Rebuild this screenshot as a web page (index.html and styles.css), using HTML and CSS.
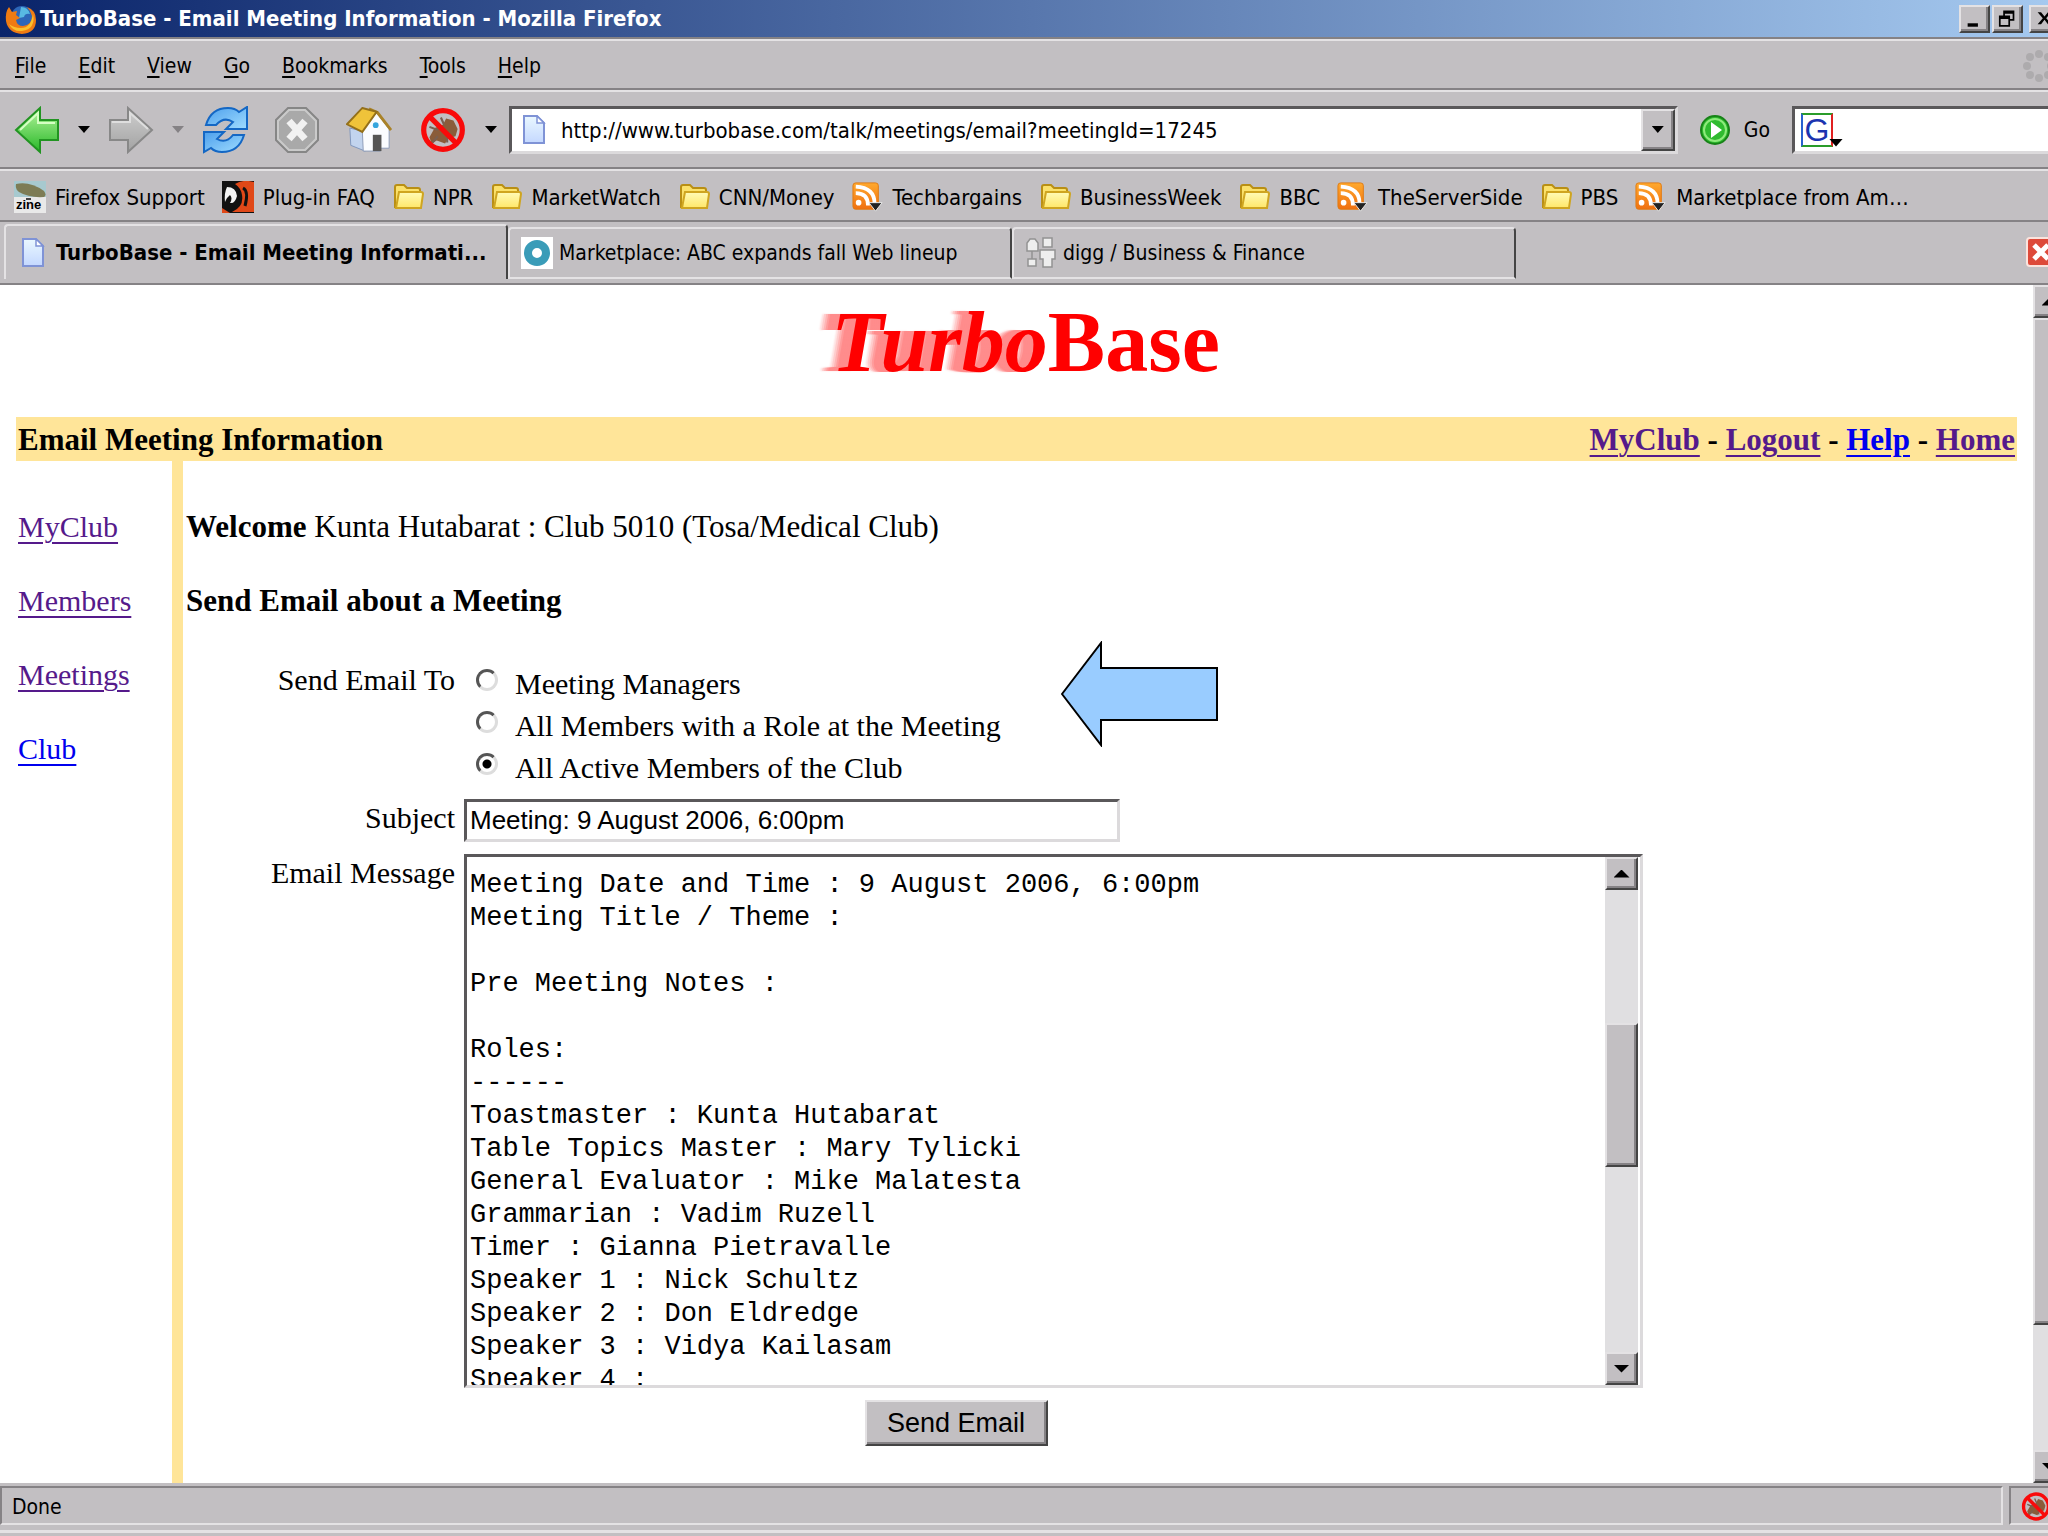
FILE: index.html
```html
<!DOCTYPE html>
<html lang="en">
<head>
  <meta charset="UTF-8" />
  <meta name="viewport" content="width=device-width, initial-scale=1.0"/>
  <title>TurboBase - Email Meeting Information</title>
  <link rel="stylesheet" href="styles.css">
</head>
<body>

<!-- shared icons -->
<svg class="defs" aria-hidden="true">
  <defs>
    <linearGradient id="gBlue" x1="0" y1="0" x2="0" y2="1"><stop offset="0" stop-color="#eaf8ff"/><stop offset="1" stop-color="#c4d8ff"/></linearGradient>
    <linearGradient id="gYellow" x1="0" y1="0" x2="0" y2="1"><stop offset="0" stop-color="#fffbb8"/><stop offset="1" stop-color="#ffe768"/></linearGradient>
    <linearGradient id="gOrange" x1="0" y1="0" x2="0" y2="1"><stop offset="0" stop-color="#ffa92e"/><stop offset="1" stop-color="#f07010"/></linearGradient>
    <linearGradient id="gGreen" x1="0" y1="0" x2="0" y2="1"><stop offset="0" stop-color="#b4f49c"/><stop offset="1" stop-color="#28b828"/></linearGradient>
    <linearGradient id="gGray" x1="0" y1="0" x2="0" y2="1"><stop offset="0" stop-color="#cfcfcf"/><stop offset="1" stop-color="#a2a2a2"/></linearGradient>
    <linearGradient id="gSky" x1="0" y1="0" x2="1" y2="1"><stop offset="0" stop-color="#4c9fec"/><stop offset="1" stop-color="#9fdcff"/></linearGradient>
  </defs>
  <symbol id="page" viewBox="0 0 24 30">
    <path d="M2 1h13l7 7v20H2z" fill="url(#gBlue)" stroke="#7f93d6" stroke-width="2"/>
    <path d="M15 1v7h7z" fill="#fff" stroke="#7f93d6" stroke-width="1.5"/>
  </symbol>
  <symbol id="folder" viewBox="0 0 32 26">
    <path d="M3 23V3q0-2 2-2h7l3 3h11q2 0 2 2v16z" fill="#fbe16a" stroke="#b98f14" stroke-width="2"/>
    <path d="M4 24L7 8h22q2 0 2 2l-2 14z" fill="url(#gYellow)" stroke="#cfa520" stroke-width="2"/>
  </symbol>
  <symbol id="rss" viewBox="0 0 34 32">
    <rect x="1" y="1" width="27" height="28" rx="3" fill="url(#gOrange)" stroke="#e07a10"/>
    <circle cx="7" cy="22" r="3" fill="#fff"/>
    <path d="M4 12q13 0 13 13M4 5q20 1 20 18" fill="none" stroke="#fff" stroke-width="4"/>
    <path d="M18 22h14l-7 9z" fill="#222" stroke="#eee"/>
  </symbol>
  <symbol id="nobug" viewBox="0 0 44 46">
    <path d="M9 30l5-9 8-3 3-6 7 2 4 8-2 7-7 2-3 5-8-3-5 3z" fill="#8a5c3a"/>
    <path d="M9 20l8 3M20 11l3 7M12 35l5-6M26 35l0-7" stroke="#7a5f50" stroke-width="2"/>
    <circle cx="22" cy="23" r="18.500" fill="none" stroke="#f90a0a" stroke-width="5"/>
    <path d="M9 10l26 26" stroke="#f90a0a" stroke-width="5"/>
  </symbol>
</svg>

<div class="window">

  <div class="titlebar">
    <svg class="fox" viewBox="0 0 32 30">
      <circle cx="17" cy="13" r="11" fill="#2d67b8"/>
      <path d="M16 3q7 0 9 7-5-1-6 3l-5 1z" fill="#58b9e2"/>
      <path d="M4 3l3 5 5-1-1 4 4 3-4 2q1 6 7 6 9-1 9-10-1-5-5-9 9 3 9 13 0 13-14 14Q3 29 1 17 0 8 4 3z" fill="#f07b12"/>
      <path d="M28 10q3 15-11 17Q8 28 4 20q5 4 12 4 10 0 12-14z" fill="#fbc02c"/>
    </svg>
    <span class="title">TurboBase - Email Meeting Information - Mozilla Firefox</span>
    <div class="winbtns">
      <button class="raised" aria-label="Minimize"><svg viewBox="0 0 30 28"><path d="M7 19h12v4H7z"/></svg></button>
      <button class="raised" aria-label="Restore"><svg viewBox="0 0 30 28"><path d="M10 4h13v12h-5v7H5V10h5zM12 8v2h6v4h3V8zM7 14v7h9v-7z" fill-rule="evenodd"/></svg></button>
      <button class="raised close" aria-label="Close"><svg viewBox="0 0 30 28"><path d="M7 6h4l4 5 4-5h4l-6 7 6 7h-4l-4-5-4 5H7l6-7z"/></svg></button>
    </div>
  </div>

  <div class="menubar bar">
    <button><u>F</u>ile</button>
    <button><u>E</u>dit</button>
    <button><u>V</u>iew</button>
    <button><u>G</u>o</button>
    <button><u>B</u>ookmarks</button>
    <button><u>T</u>ools</button>
    <button><u>H</u>elp</button>
    <svg class="throbber" viewBox="0 0 32 32" fill="#adabad">
      <circle cx="16" cy="4" r="4"/><circle cx="25" cy="7" r="4"/><circle cx="28" cy="16" r="4"/><circle cx="25" cy="25" r="4"/>
      <circle cx="16" cy="28" r="4"/><circle cx="7" cy="25" r="4"/><circle cx="4" cy="16" r="4"/><circle cx="7" cy="7" r="4"/>
    </svg>
  </div>

  <div class="toolbar bar">
    <button class="tool" aria-label="Back"><svg viewBox="0 0 46 48"><path d="M2 24L26 2v12h18v20H26v12z" fill="url(#gGreen)" stroke="#219421" stroke-width="2"/><path d="M6 24L24 7v10h17" fill="none" stroke="#d5ffc4" stroke-width="2"/></svg></button>
    <span class="caret"></span>
    <button class="tool" aria-label="Forward"><svg viewBox="0 0 46 48"><path d="M44 24L20 2v12H2v20h18v12z" fill="url(#gGray)" stroke="#888" stroke-width="2"/><path d="M4 16h18V7l18 16" fill="none" stroke="#dedede" stroke-width="2"/></svg></button>
    <span class="caret off"></span>
    <button class="tool reload" aria-label="Reload"><svg viewBox="0 0 46 48">
      <path d="M4 19Q9 2 26 2q7 0 11 4l8-5v22H24l7-7q-9-6-17 3z" fill="url(#gSky)" stroke="#1467c4" stroke-width="2"/>
      <path d="M42 29Q37 46 20 46q-7 0-11-4l-7 4V26h20l-7 7q9 5 16-4z" fill="url(#gSky)" stroke="#1467c4" stroke-width="2"/></svg></button>
    <button class="tool stop" aria-label="Stop"><svg viewBox="0 0 46 48"><path d="M14 2h18l12 12v20L32 46H14L2 34V14z" fill="#a9a9a9" stroke="#868686" stroke-width="2"/><path d="M15 4h16l11 11v18L31 44H15L4 33V15z" fill="none" stroke="#cacaca" stroke-width="2"/><path d="M15 15l16 18M31 15L15 33" stroke="#f2f2f2" stroke-width="7"/></svg></button>
    <button class="tool home" aria-label="Home"><svg viewBox="0 0 48 48">
      <path d="M4 22l16 4v20L5 40z" fill="#c2d4ee" stroke="#8096bd"/>
      <path d="M17 24L32 6l13 17v20H36v3H18z" fill="#fafcff" stroke="#8c9bb8"/>
      <path d="M28 46V29h9v17z" fill="#555"/>
      <circle cx="31" cy="19" r="3" fill="#36a5dd"/>
      <path d="M24 2l9 4 14 18" fill="none" stroke="#a98228" stroke-width="3"/>
      <path d="M17 1l15 4-15 21L1 18z" fill="#efc33a" stroke="#94701a" stroke-width="2"/></svg></button>
    <button class="tool nobug" aria-label="Block"><svg viewBox="0 0 44 46"><use href="#nobug"/></svg></button>
    <span class="caret"></span>

    <div class="urlbox sunken">
      <svg class="pageicon" viewBox="0 0 24 30"><use href="#page"/></svg>
      <input type="text" aria-label="Location" value="http://www.turbobase.com/talk/meetings/email?meetingId=17245">
      <button class="raised drop" aria-label="Show history"><span class="caret"></span></button>
    </div>
    <button class="go">
      <svg viewBox="0 0 30 32"><circle cx="15" cy="16" r="14" fill="#2fbb2f" stroke="#178317" stroke-width="2"/><circle cx="15" cy="16" r="11" fill="none" stroke="#8eea7c" stroke-width="2"/><path d="M11 8l11 8-11 8z" fill="#fff"/></svg>
      Go
    </button>
    <div class="search sunken">
      <button class="engine" aria-label="Search engine">
        <span class="g">G</span>
        <span class="caret"></span>
      </button>
      <input type="text" aria-label="Search">
    </div>
  </div>

  <div class="bookmarks bar">
    <a href="#"><svg viewBox="0 0 32 32"><path fill="#a7c9cf" d="M0 0h32v16H0z"/><path fill="#e9e9e9" d="M0 16h32v16H0z"/><path d="M2 3q14-3 28 7 3 4 0 6-15 1-25-5Q1 8 2 3z" fill="#7d7c55"/><path d="M12 18h5" stroke="#444" stroke-width="2"/><text x="2" y="28" class="zine">zine</text></svg>Firefox Support</a>
    <a href="#"><svg viewBox="0 0 32 32"><path fill="#111" d="M0 0h32v32H0z"/><path d="M13 3q8-5 19-2v30H10q12-5 10-17-1-7-7-11z" fill="#e04818"/><path d="M21 7q6 3 2 18" fill="none" stroke="#111" stroke-width="3"/><path d="M5 6q9 0 10 9-2 8-7 7 3-5 0-8-4 3-5 7-1-9 2-15z" fill="#f4f4f4"/><path d="M0 27l8 5H0z" fill="#e04818"/></svg>Plug-in FAQ</a>
    <a href="#"><svg viewBox="0 0 32 26"><use href="#folder"/></svg>NPR</a>
    <a href="#"><svg viewBox="0 0 32 26"><use href="#folder"/></svg>MarketWatch</a>
    <a href="#"><svg viewBox="0 0 32 26"><use href="#folder"/></svg>CNN/Money</a>
    <a href="#"><svg viewBox="0 0 34 32"><use href="#rss"/></svg>Techbargains</a>
    <a href="#"><svg viewBox="0 0 32 26"><use href="#folder"/></svg>BusinessWeek</a>
    <a href="#"><svg viewBox="0 0 32 26"><use href="#folder"/></svg>BBC</a>
    <a href="#"><svg viewBox="0 0 34 32"><use href="#rss"/></svg>TheServerSide</a>
    <a href="#"><svg viewBox="0 0 32 26"><use href="#folder"/></svg>PBS</a>
    <a href="#"><svg viewBox="0 0 34 32"><use href="#rss"/></svg>Marketplace from Am…</a>
  </div>

  <div class="tabs">
    <button class="tab active"><svg class="pageicon" viewBox="0 0 24 30"><use href="#page"/></svg>TurboBase - Email Meeting Informati...</button>
    <button class="tab"><svg viewBox="0 0 32 32"><path fill="#fff" d="M0 0h32v32H0z"/><circle cx="16" cy="16" r="9" fill="none" stroke="#3a9cb8" stroke-width="8"/></svg>Marketplace: ABC expands fall Web lineup</button>
    <button class="tab"><svg viewBox="0 0 32 32" fill="#eee" stroke="#929292" stroke-width="1.500"><path d="M2 14V6l3-4h5l3 4v8zM18 1h9v9h-9zM15 13h15v9h-3v8h-9v-8h-3zM3 22h8v7H3zM7 14v8"/></svg>digg / Business &amp; Finance</button>
    <button class="tabclose" aria-label="Close tab"><svg viewBox="0 0 30 30"><rect x="1" y="1" width="28" height="28" rx="3" fill="#dd4a3a" stroke="#fbe3dd" stroke-width="2"/><path d="M8 8l14 14M22 8L8 22" stroke="#fff" stroke-width="5"/></svg></button>
  </div>

  <div class="view">
    <div class="site">
      <h1 class="logo"><i>Turbo</i>Base</h1>

      <div class="header">
        <b>Email Meeting Information</b>
        <div class="toplinks"><a href="#" class="visited">MyClub</a> - <a href="#" class="visited">Logout</a> - <a href="#">Help</a> - <a href="#" class="visited">Home</a></div>
      </div>

      <div class="body">
        <div class="side">
          <a href="#" class="visited">MyClub</a>
          <a href="#" class="visited">Members</a>
          <a href="#" class="visited">Meetings</a>
          <a href="#">Club</a>
        </div>

        <div class="main">
          <p><b>Welcome</b> Kunta Hutabarat : Club 5010 (Tosa/Medical Club)</p>
          <p><b>Send Email about a Meeting</b></p>

          <form onsubmit="return false">
            <span class="lbl" id="toLabel">Send Email To</span>
            <div class="recipients" role="radiogroup" aria-labelledby="toLabel">
              <label><input type="radio" name="to"> Meeting Managers</label>
              <label><input type="radio" name="to"> All Members with a Role at the Meeting</label>
              <label><input type="radio" name="to" checked> All Active Members of the Club</label>
              <svg class="arrow" viewBox="0 0 158 106"><path d="M1 53L40 2v25h116v52H40v25z" fill="#99ccff" stroke="#000" stroke-width="2"/></svg>
            </div>

            <label class="lbl" for="subject">Subject</label>
            <input type="text" id="subject" class="subject sunken" value="Meeting: 9 August 2006, 6:00pm">

            <label class="lbl" for="message">Email Message</label>
            <div class="message sunken">
              <textarea id="message" spellcheck="false">Meeting Date and Time : 9 August 2006, 6:00pm
Meeting Title / Theme :

Pre Meeting Notes :

Roles:
------
Toastmaster : Kunta Hutabarat
Table Topics Master : Mary Tylicki
General Evaluator : Mike Malatesta
Grammarian : Vadim Ruzell
Timer : Gianna Pietravalle
Speaker 1 : Nick Schultz
Speaker 2 : Don Eldredge
Speaker 3 : Vidya Kailasam
Speaker 4 :</textarea>
              <div class="scrollbar">
                <button type="button" class="raised" aria-label="Scroll up"><span class="caret up"></span></button>
                <div class="track"><div class="thumb raised"></div></div>
                <button type="button" class="raised" aria-label="Scroll down"><span class="caret"></span></button>
              </div>
            </div>

            <div class="actions"><button class="send raised">Send Email</button></div>
          </form>
        </div>
      </div>
    </div>

    <div class="scrollbar pagescroll">
      <button class="raised" aria-label="Scroll up"><span class="caret up"></span></button>
      <div class="track"><div class="thumb raised"></div></div>
      <button class="raised" aria-label="Scroll down"><span class="caret"></span></button>
    </div>
  </div>

  <div class="status">
    <div class="panel">Done</div>
    <div class="panel small"><svg viewBox="0 0 44 46"><use href="#nobug"/></svg></div>
  </div>

</div>

</body>
</html>
```
FILE: styles.css
```css
* { box-sizing: border-box; }
body { margin: 0; overflow: hidden; background: #c2bfc2; color: #000; font-family: "DejaVu Sans Condensed", "Noto Sans", sans-serif; font-size: 21px; }
button, input, textarea { font: inherit; color: inherit; margin: 0; padding: 0; border: 0; background: none; outline: none; border-radius: 0; }
svg { display: block; flex: none; }
.defs { position: absolute; width: 0; height: 0; }

/* the maximized window hangs over the right edge of the screen */
.window { display: flex; flex-direction: column; height: 100vh; margin-right: -18px; }

.raised { background: #c2bfc2; border: 2px solid; border-color: #e4e2e4 #444 #444 #e4e2e4; box-shadow: inset -2px -2px #858285; }
.sunken { background: #fff; border: 3px solid; border-color: #5a585a #dcdadc #dcdadc #5a585a; }
.caret { display: block; flex: none; width: 12px; height: 7px; background: #000; clip-path: polygon(0 0, 100% 0, 50% 100%); }
.caret.up { clip-path: polygon(0 100%, 100% 100%, 50% 0); }
.caret.off { background: #858285; }

.titlebar { display: flex; align-items: center; height: 37px; padding-left: 4px; background: linear-gradient(90deg, #0a246a, #a6caf0); color: #fff; font-size: 22px; font-weight: bold; flex: none; }
.fox { width: 34px; height: 30px; }
.title { flex: 1; padding-left: 2px; }
.winbtns { display: flex; gap: 2px; padding-right: 6px; }
.winbtns button { width: 31px; height: 28px; }
.winbtns svg { width: 27px; height: 24px; }
.winbtns .close { margin-left: 4px; }

.bar { display: flex; align-items: center; flex: none; border-top: 2px solid #e4e2e4; border-bottom: 2px solid #858285; }
.menubar { height: 51px; margin-top: 2px; padding: 2px 11px 0 15px; gap: 32px; box-shadow: 0 -2px #858285; }
u { text-underline-offset: 3px; text-decoration-thickness: 2px; }
.throbber { width: 32px; height: 32px; margin-left: auto; }

.toolbar { height: 79px; padding-left: 14px; }
.toolbar > .caret { margin: 0 18px; }
.tool svg { width: 46px; height: 48px; }
.tool.stop, .tool.home { margin-left: 26px; }
.tool.nobug { margin-left: 28px; }
.toolbar > .nobug + .caret { margin: 0 12px 0 19px; }
.urlbox { display: flex; align-items: center; flex: 1; height: 48px; }
.pageicon { width: 24px; height: 30px; }
.urlbox .pageicon { margin-left: 10px; }
.urlbox input { flex: 1; min-width: 0; height: 40px; padding: 2px 0 0 15px; font-size: 22px; }
.drop { display: flex; align-items: center; justify-content: center; width: 34px; height: 42px; }
.go { display: flex; align-items: center; gap: 14px; padding: 0 22px; }
.go svg { width: 30px; height: 32px; }
.search { display: flex; align-items: center; width: 274px; height: 48px; padding-left: 6px; border-right: 0; }
.search input { flex: 1; min-width: 0; }
.engine { display: flex; align-items: flex-end; }
.g { width: 32px; height: 34px; border: 2px solid; border-color: #2a9c2a #e02020 #2a9c2a #2860d0; color: #1c34b0; font: 32px/30px "Liberation Sans", sans-serif; }
.engine .caret { width: 14px; height: 8px; margin-left: -4px; }

.bookmarks { height: 53px; padding: 3px 0 0 14px; gap: 17px; font-size: 22px; }
.bookmarks a { display: flex; align-items: center; gap: 9px; color: #000; text-decoration: none; white-space: nowrap; }
.bookmarks svg { width: 32px; height: 32px; }
.zine { font: bold 13px "Liberation Sans", sans-serif; }

.tabs { display: flex; align-items: flex-end; flex: none; height: 63px; padding: 4px 4px 4px; border-bottom: 2px solid #858285; }
.tab { display: flex; align-items: center; gap: 6px; width: 504px; height: 52px; padding-left: 11px; border: 2px solid; border-color: #e4e2e4 #444 #e4e2e4 #e4e2e4; border-radius: 4px 4px 0 0; white-space: nowrap; }
.tab svg { width: 32px; height: 32px; }
.tab.active { height: 55px; padding-left: 15px; gap: 11px; border-bottom: 0; font-size: 22px; font-weight: bold; }
.tab .pageicon { width: 24px; height: 30px; }
.tabclose { margin: 0 6px 12px auto; }
.tabclose svg { width: 30px; height: 30px; }

.view { display: flex; flex: 1; min-height: 0; background: #fff; font: 30px/37px "Liberation Serif", serif; }
.site { display: flex; flex-direction: column; flex: 1; padding: 0 16px; }
.site a { color: #00e; text-underline-offset: 5px; text-decoration-thickness: 2px; }
.site a.visited { color: #551a8b; }
.logo { margin: 0 0 30px; padding: 12px 0 0 18px; text-align: center; color: #f00; font-size: 86px; line-height: 90px; }
.logo i { text-shadow: -2px 0 #ff8c8c, -4px 0 #ff8c8c, -6px 0 #ff8c8c, -8px 0 #ff8c8c, -10px 0 #ff8c8c, -12px 0 #ff9c9c, -14px 0 #ffb4b4, -16px 0 #ffcccc, -18px 0 2px #ffe0e0; }
.header { display: flex; justify-content: space-between; align-items: center; height: 44px; padding: 0 2px; background: #ffe599; font-size: 31px; }
.toplinks { font-weight: bold; }
.body { display: flex; flex: 1; }
.side { display: flex; flex-direction: column; align-items: flex-start; gap: 37px; width: 156px; padding: 47px 0 0 2px; }
.main { flex: 1; padding: 47px 0 0 3px; border-left: 11px solid #ffe599; }
.main p { margin: 0 0 37px; font-size: 31px; }

form { display: grid; grid-template-columns: 269px 1fr; column-gap: 9px; row-gap: 12px; max-width: 1540px; margin-top: 42px; }
.lbl { text-align: right; line-height: 38px; }
.recipients { position: relative; }
.recipients label { display: flex; align-items: center; gap: 17px; height: 42px; padding: 3px 0 0 12px; }
input[type=radio] { appearance: none; width: 22px; height: 22px; margin-bottom: 8px; border: 3px solid; border-color: #555 #ddd #ddd #555; border-radius: 50%; }
input[type=radio]:checked { background: radial-gradient(circle, #000 4px, #fff 5px); }
/* callout arrow over the form */
.arrow { position: absolute; left: 597px; top: -20px; width: 158px; height: 106px; }
.subject { width: 656px; height: 43px; padding-left: 3px; font: 26px "Liberation Sans", sans-serif; }
.message { display: flex; max-width: 1179px; height: 534px; padding-right: 2px; }
.message textarea { flex: 1; padding: 12px 0 0 3px; resize: none; overflow: hidden; font: 27px/33px "Liberation Mono", monospace; }
.scrollbar { display: flex; flex-direction: column; flex: none; width: 33px; background: #e0dfe1; }
.scrollbar button { display: flex; align-items: center; justify-content: center; height: 33px; }
.scrollbar .caret { width: 16px; height: 8px; }
.track { flex: 1; }
.thumb { height: 144px; margin-top: 133px; }
.pagescroll .thumb { height: 89%; margin-top: 0; }
.actions { grid-column: 1 / -1; text-align: center; }
.send { width: 183px; height: 46px; font: 27px "Liberation Sans", sans-serif; }

.status { display: flex; gap: 6px; flex: none; height: 53px; padding: 3px 0 8px; border-bottom: 3px solid #c2bfc2; box-shadow: inset 0 -3px #e4e2e4; }
.panel { display: flex; align-items: center; flex: 1; padding: 2px 0 0 10px; border: 2px solid; border-color: #858285 #e4e2e4 #e4e2e4 #858285; }
.panel.small { flex: none; width: 57px; }
.small svg { width: 30px; height: 31px; }
```
